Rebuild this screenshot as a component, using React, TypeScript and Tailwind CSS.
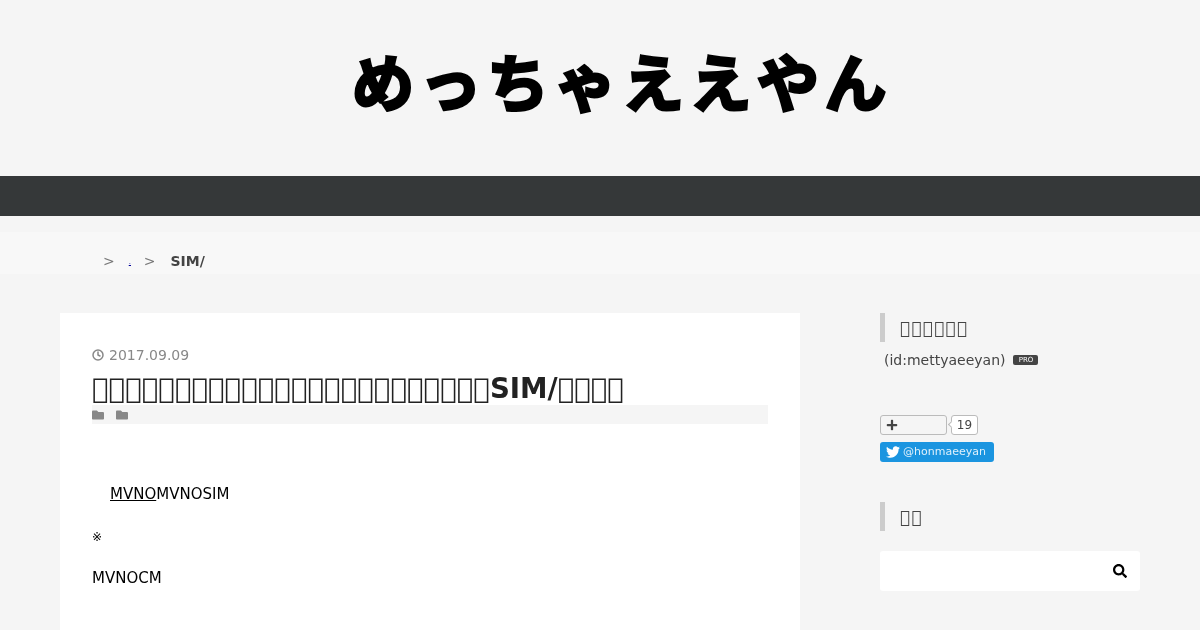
import { FaTwitter, FaSearch, FaFolder, FaPlus } from 'react-icons/fa'
import { FiClock } from 'react-icons/fi'

const sans = "font-['DejaVu_Sans',sans-serif]"
const tofu = (n: number) => '\uE0FF'.repeat(n)

function SideTitle({ children }: { children: string }) {
  return (
    <h3 className="border-l-[5px] border-[#cccccc] pl-[15px] h-[29px] leading-[31px] text-[17px] tracking-[1.2px] text-[#444444]">
      {children}
    </h3>
  )
}

export default function App() {
  return (
    <div className={`${sans} h-[630px] overflow-hidden bg-[#f5f5f5] text-[#333333] will-change-transform`}>
      <header className="h-[176px] flex justify-center items-center pl-[44px] pb-[16px]">
        <h1 className="font-['Noto_Sans_CJK_JP',sans-serif] font-bold text-black text-[62px] leading-none tracking-[5.5px] whitespace-nowrap [-webkit-text-stroke:3px_black]">
          めっちゃええやん
        </h1>
      </header>
      <nav className="h-[40px] bg-[#353839]" />
      <div className="mt-[16px] h-[42px] bg-[#f8f8f8] pl-[103px] pt-[16px] flex items-center text-[14px] leading-[18px] text-[#777777]">
        <span>&gt;</span>
        <a className="ml-[14px] w-[5px] h-[18px] text-[#000099] underline text-[7px] leading-[20px]">.</a>
        <span className="ml-[10px]">&gt;</span>
        <b className="ml-[15px] text-[#444444]">SIM/</b>
      </div>
      <div className="mt-[39px] px-[60px] flex items-start">
        <main className="w-[740px] h-[400px] bg-white px-[32px] pt-[32px]">
          <div className="flex items-center gap-[5px] text-[14px] leading-[20px] text-[#888888]">
            <FiClock className="w-[12px] h-[12px] stroke-[3px]" />
            <span>2017.09.09</span>
          </div>
          <h2 className="mt-[6px] text-[27.64px] leading-[36px] font-bold text-[#222222] whitespace-nowrap">
            {tofu(24)}SIM/{tofu(4)}
          </h2>
          <div className="mt-[-2px] h-[19px] bg-[#f5f5f5] flex items-center gap-[12px] text-[#888888]">
            <FaFolder className="w-[12px] h-[12px]" />
            <FaFolder className="w-[12px] h-[12px]" />
          </div>
          <div className="pt-[59px] text-[15px] leading-[22px] text-black">
            <p className="pl-[18px]">
              <span className="underline">MVNO</span>MVNOSIM
            </p>
            <p className="mt-[21px] text-[12px]">※</p>
            <p className="mt-[19px]">MVNOCM</p>
          </div>
        </main>
        <aside className="ml-[80px] w-[260px] text-[#444444]">
          <SideTitle>{tofu(6)}</SideTitle>
          <div className="mt-[7px] pl-[4px] flex items-center text-[14px] leading-[22px]">
            <span>(id:mettyaeeyan)</span>
            <span className="ml-[8px] w-[25px] h-[10px] rounded-[2px] bg-[#444444] text-white text-[7px] leading-[10px] text-center">PRO</span>
          </div>
          <div className="mt-[44px] flex items-center h-[20px]">
            <div className="w-[67px] h-[20px] border border-[#bbbbbb] rounded-[3px] bg-[#f5f5f5] flex items-center pl-[5px]">
              <FaPlus className="w-[12px] h-[12px] text-[#444444]" />
            </div>
            <div className="relative ml-[4px] w-[27px] h-[20px] border border-[#bbbbbb] rounded-[3px] bg-white text-[12px] leading-[18px] text-center">
              19
              <span className="absolute left-[-3px] top-[6px] w-[5px] h-[5px] rotate-45 bg-white border-l border-b border-[#bbbbbb]" />
            </div>
          </div>
          <div className="mt-[7px] w-[114px] h-[20px] rounded-[3px] bg-[#1b95e0] text-white flex items-center pl-[6px] gap-[3px] text-[11px]">
            <FaTwitter className="w-[14px] h-[14px]" />
            <span className="text-[#dff0fb]">@honmaeeyan</span>
          </div>
          <div className="mt-[40px]">
            <SideTitle>{tofu(2)}</SideTitle>
          </div>
          <div className="mt-[20px] h-[40px] bg-white rounded-[3px] flex items-center justify-end pr-[13px]">
            <FaSearch className="w-[14px] h-[14px] text-black" />
          </div>
        </aside>
      </div>
    </div>
  )
}
